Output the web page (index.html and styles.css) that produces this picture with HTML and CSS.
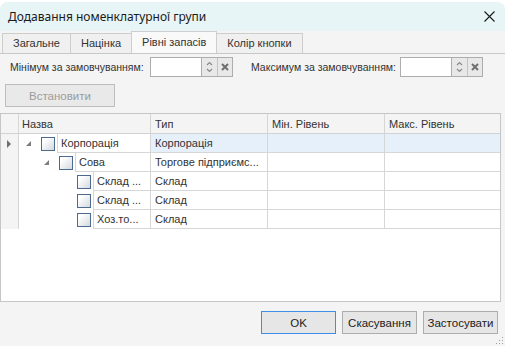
FILE: index.html
```html
<!DOCTYPE html>
<html lang="uk">
<head>
    <meta charset="UTF-8">
    <meta name="viewport" content="width=device-width, initial-scale=1.0">
    <title>Додавання номенклатурної групи</title>
    <link rel="stylesheet" href="styles.css">
</head>
<body>
    <div class="window">
        <div class="titlebar">
            <span class="title">Додавання номенклатурної групи</span>
            <svg class="close" width="11" height="11" viewBox="0 0 11 11">
                <path d="M0.5 0.5L10.5 10.5M10.5 0.5L0.5 10.5" stroke="#1a1a1a" stroke-width="1.1" fill="none"/>
            </svg>
        </div>
        <div class="tabs">
            <div class="tab">Загальне</div>
            <div class="tab">Націнка</div>
            <div class="tab active">Рівні запасів</div>
            <div class="tab">Колір кнопки</div>
        </div>
        <div class="panel">
            <div class="defaults">
                <span class="field-label">Мінімум за замовчуванням:</span>
                <div class="spin-edit">
                    <div class="spin-input"></div>
                    <div class="spin-btn">
                        <svg width="7" height="12" viewBox="0 0 7 12">
                            <path d="M1 4L3.5 1.5L6 4M1 8L3.5 10.5L6 8" stroke="#8a8a8a" stroke-width="1.2" fill="none"/>
                        </svg>
                    </div>
                    <div class="clear-btn">
                        <svg width="8" height="8" viewBox="0 0 8 8">
                            <path d="M1 1L7 7M7 1L1 7" stroke="#6f6f6f" stroke-width="2" fill="none"/>
                        </svg>
                    </div>
                </div>
                <span class="field-label max-label">Максимум за замовчуванням:</span>
                <div class="spin-edit">
                    <div class="spin-input"></div>
                    <div class="spin-btn">
                        <svg width="7" height="12" viewBox="0 0 7 12">
                            <path d="M1 4L3.5 1.5L6 4M1 8L3.5 10.5L6 8" stroke="#8a8a8a" stroke-width="1.2" fill="none"/>
                        </svg>
                    </div>
                    <div class="clear-btn">
                        <svg width="8" height="8" viewBox="0 0 8 8">
                            <path d="M1 1L7 7M7 1L1 7" stroke="#6f6f6f" stroke-width="2" fill="none"/>
                        </svg>
                    </div>
                </div>
            </div>
            <div class="actions">
                <button class="button set-button" disabled>Встановити</button>
            </div>
            <div class="grid">
                <div class="grid-row grid-head">
                    <div class="cell indicator"></div>
                    <div class="cell">Назва</div>
                    <div class="cell">Тип</div>
                    <div class="cell">Мін. Рівень</div>
                    <div class="cell">Макс. Рівень</div>
                </div>
                <div class="grid-row selected">
                    <div class="cell indicator"><span class="pointer"></span></div>
                    <div class="cell name-cell">
                        <span class="expander"><svg width="5" height="5" viewBox="0 0 5 5"><polygon points="5,0 5,5 0,5" fill="#7c7c7c"/></svg></span>
                        <span class="check"></span>
                        <span class="node-text">Корпорація</span>
                    </div>
                    <div class="cell">Корпорація</div>
                    <div class="cell"></div>
                    <div class="cell"></div>
                </div>
                <div class="grid-row">
                    <div class="cell indicator"></div>
                    <div class="cell name-cell">
                        <span class="indent"></span>
                        <span class="expander"><svg width="5" height="5" viewBox="0 0 5 5"><polygon points="5,0 5,5 0,5" fill="#7c7c7c"/></svg></span>
                        <span class="check"></span>
                        <span class="node-text">Сова</span>
                    </div>
                    <div class="cell">Торгове підприємс...</div>
                    <div class="cell"></div>
                    <div class="cell"></div>
                </div>
                <div class="grid-row">
                    <div class="cell indicator"></div>
                    <div class="cell name-cell">
                        <span class="indent double"></span>
                        <span class="expander"></span>
                        <span class="check"></span>
                        <span class="node-text">Склад ...</span>
                    </div>
                    <div class="cell">Склад</div>
                    <div class="cell"></div>
                    <div class="cell"></div>
                </div>
                <div class="grid-row">
                    <div class="cell indicator"></div>
                    <div class="cell name-cell">
                        <span class="indent double"></span>
                        <span class="expander"></span>
                        <span class="check"></span>
                        <span class="node-text">Склад ...</span>
                    </div>
                    <div class="cell">Склад</div>
                    <div class="cell"></div>
                    <div class="cell"></div>
                </div>
                <div class="grid-row">
                    <div class="cell indicator"></div>
                    <div class="cell name-cell">
                        <span class="indent double"></span>
                        <span class="expander"></span>
                        <span class="check"></span>
                        <span class="node-text">Хоз.то...</span>
                    </div>
                    <div class="cell">Склад</div>
                    <div class="cell"></div>
                    <div class="cell"></div>
                </div>
            </div>
            <div class="footer">
                <button class="button default">OK</button>
                <button class="button">Скасування</button>
                <button class="button">Застосувати</button>
                <svg class="grip" width="9" height="9" viewBox="0 0 9 9">
                    <rect x="7" y="1" width="1" height="1" fill="#a0a0a0"/>
                    <rect x="4" y="4" width="1" height="1" fill="#a0a0a0"/>
                    <rect x="7" y="4" width="1" height="1" fill="#a0a0a0"/>
                    <rect x="1" y="7" width="1" height="1" fill="#a0a0a0"/>
                    <rect x="4" y="7" width="1" height="1" fill="#a0a0a0"/>
                    <rect x="7" y="7" width="1" height="1" fill="#a0a0a0"/>
                </svg>
            </div>
        </div>
    </div>
</body>
</html>
```

FILE: styles.css
```css
body {
    margin: 0;
    background-color: #fff;
    font-family: "Liberation Sans", Arial, sans-serif;
    font-size: 11px;
    color: #333;
}
.window {
    margin-top: 2px;
    height: 344px;
    display: flex;
    flex-direction: column;
    background-color: #f4f4f4;
    border-radius: 8px 8px 0 0;
    overflow: hidden;
}
.titlebar {
    height: 29px;
    flex-shrink: 0;
    display: flex;
    align-items: center;
    justify-content: space-between;
    padding: 0 10px 0 8px;
    background-color: #e8f5f6;
}
.title {
    font-family: "Noto Sans", sans-serif;
    font-size: 12px;
    color: #1a1a1a;
}
.tabs {
    height: 22px;
    flex-shrink: 0;
    display: flex;
    align-items: flex-end;
    padding-left: 2px;
}
.tab {
    height: 19px;
    line-height: 19px;
    padding: 0 10px;
    margin-right: -1px;
    border: 1px solid #cdcdcd;
    border-bottom: none;
    background-color: #f0f0f0;
    font-size: 11px;
}
.tab.active {
    height: 21px;
    line-height: 20px;
    background-color: #f9f9f9;
}
.panel {
    flex: 1;
    display: flex;
    flex-direction: column;
    border-top: 1px solid #c8c8c8;
    padding-top: 3px;
}
.defaults {
    height: 20px;
    display: flex;
    align-items: center;
    padding-left: 10px;
    font-size: 10.5px;
}
.field-label {
    width: 140px;
    white-space: nowrap;
}
.max-label {
    width: 149px;
    margin-left: 18px;
}
.spin-edit {
    height: 20px;
    box-sizing: border-box;
    display: flex;
    border: 1px solid #adadad;
}
.spin-input {
    width: 50px;
    background-color: #fff;
    border-right: 1px solid #adadad;
}
.spin-btn,
.clear-btn {
    display: flex;
    align-items: center;
    justify-content: center;
    background-color: #e8e8e8;
}
.spin-btn {
    width: 15px;
    border-right: 1px solid #c4c4c4;
}
.clear-btn {
    width: 14px;
}
.actions {
    margin-top: 7px;
    padding-left: 5px;
}
.button {
    height: 23px;
    width: 75px;
    padding: 0;
    border: 1px solid #adadad;
    background-color: #e6e6e6;
    color: #222;
    font-family: "Liberation Sans", Arial, sans-serif;
    font-size: 11.5px;
}
.button.default {
    border-color: #3d8ee6;
}
.set-button {
    width: 110px;
    color: #9c9c9c;
    border-color: #bdbdbd;
    background-color: #e9e9e9;
}
.grid {
    margin-top: 6px;
    width: 501px;
    height: 189px;
    box-sizing: border-box;
    border: 1px solid #c6c6c6;
    background-color: #fff;
}
.grid-row {
    display: grid;
    grid-template-columns: 18px 132px 117px 117px 115px;
    height: 19px;
}
.grid-head {
    height: 20px;
    background-color: #f4f4f4;
    border-bottom: 1px solid #d2d2d2;
    box-sizing: border-box;
}
.cell {
    display: flex;
    align-items: center;
    padding-left: 4px;
    white-space: nowrap;
    overflow: hidden;
    border-right: 1px solid #d6d6d6;
    border-bottom: 1px solid #d6d6d6;
}
.cell:last-child {
    border-right: none;
}
.grid-head .cell {
    border-bottom: none;
}
.grid-head .cell:nth-child(2) {
    padding-left: 3px;
}
.cell.indicator {
    padding-left: 0;
    justify-content: center;
    background-color: #f4f4f4;
    border-bottom: none;
}
.pointer {
    width: 0;
    height: 0;
    margin-left: -2px;
    border-top: 4px solid transparent;
    border-bottom: 4px solid transparent;
    border-left: 4px solid #6e6e6e;
}
.name-cell {
    padding-left: 0;
    border-bottom: none;
    align-items: stretch;
}
.indent {
    width: 18px;
    flex-shrink: 0;
}
.indent.double {
    width: 36px;
}
.expander {
    width: 18px;
    flex-shrink: 0;
    display: flex;
    align-items: center;
    justify-content: center;
}
.check {
    width: 12px;
    height: 12px;
    flex-shrink: 0;
    align-self: center;
    margin-left: 4px;
    border: 1px solid #4a6a90;
    background: linear-gradient(135deg, #ffffff 20%, #d4d8de);
}
.node-text {
    flex: 1;
    display: flex;
    align-items: center;
    margin-left: 2px;
    padding-left: 3px;
    border-left: 1px solid #d6d6d6;
    border-bottom: 1px solid #d6d6d6;
    background-color: #fff;
}
.selected .cell:nth-child(n+3) {
    background-color: #e5f0fa;
}
.footer {
    flex: 1;
    display: flex;
    justify-content: flex-end;
    align-items: flex-start;
    gap: 6px;
    padding: 9px 7px 0 0;
    position: relative;
}
.grip {
    position: absolute;
    right: 1px;
    bottom: 1px;
}
```
